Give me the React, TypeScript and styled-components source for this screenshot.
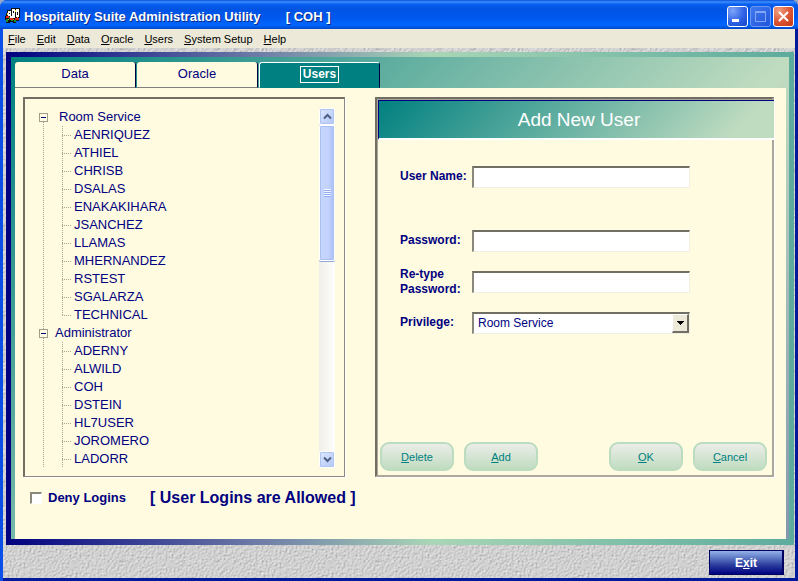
import React, { useState } from "react";
import styled, { createGlobalStyle, css } from "styled-components";

const navy = "#000080";
const cream = "#fffbe0";
const sans = '"Liberation Sans", Arial, sans-serif';

const grain =
  "url(\"data:image/svg+xml;utf8,<svg xmlns='http://www.w3.org/2000/svg' width='256' height='256'><filter id='g' x='0' y='0' width='100%25' height='100%25' color-interpolation-filters='sRGB'><feTurbulence type='fractalNoise' baseFrequency='0.5' numOctaves='2' stitchTiles='stitch'/><feDiffuseLighting lighting-color='rgb(236,236,236)' surfaceScale='0.7'><feDistantLight azimuth='225' elevation='62'/></feDiffuseLighting></filter><rect width='256' height='256' filter='url(%23g)'/></svg>\")";

const GlobalStyle = createGlobalStyle`
  *, *::before, *::after { box-sizing: border-box; }
  body { margin: 0; background: #9aa8c8; font-family: ${sans}; }
  button, input, select { font-family: inherit; }
  button { cursor: default; }
  ul { list-style: none; margin: 0; padding: 0; }
`;

const Window = styled.div`
  display: flex;
  flex-direction: column;
  min-height: 100vh;
  border-radius: 7px 7px 0 0;
  overflow: hidden;
  background: linear-gradient(90deg, #0a50e8 50%, #001a9a 50%);
`;

const TitleBar = styled.header`
  display: flex;
  align-items: center;
  height: 29px;
  padding: 3px 4px 0 5px;
  background: linear-gradient(
    #0a50d8 0,
    #3c90ff 2px,
    #0a60f0 4px,
    #0054e3 9px,
    #0058ee 18px,
    #0066ff 25px,
    #0048c8 29px
  );
  color: #fff;
`;

const Title = styled.h1`
  flex: 1;
  margin: 0 0 0 3px;
  padding-top: 1px;
  font-size: 13px;
  line-height: 17px;
  font-weight: 700;
  white-space: pre;
  text-shadow: 1px 1px 0 #0a2a8a;
`;

const Captions = styled.div`
  display: flex;
  gap: 2px;
`;

const captionTone = {
  blue: "radial-gradient(circle at 25% 20%, #7fa4f8, #2e62e6 55%, #1746c6)",
  dim: "linear-gradient(135deg, #3f78ec, #2256dc)",
  red: "radial-gradient(circle at 25% 20%, #f0a080, #dc5432 55%, #c03a14)",
};

const CaptionButton = styled.button<{ $tone: keyof typeof captionTone }>`
  display: grid;
  place-items: center;
  width: 21px;
  height: 21px;
  padding: 0;
  border: 1px solid ${(p) => (p.$tone === "dim" ? "#6c97f4" : "#fff")};
  border-radius: 3px;
  background: ${(p) => captionTone[p.$tone]};
`;

const MenuBar = styled.nav`
  display: flex;
  gap: 11px;
  height: 19px;
  margin: 0 3px;
  padding: 0 5px;
  background: #ece9d8;
`;

const MenuItem = styled.button`
  padding: 0;
  border: 0;
  background: none;
  color: #000;
  font-size: 11px;
  line-height: 18px;
`;

const Client = styled.div`
  flex: 1;
  display: flex;
  flex-direction: column;
  margin: 0 3px;
  padding: 4px 1px 0 3px;
  border-bottom: 3px solid #001a9a;
  background: ${grain} #c8c8c8;
`;

const Frame = styled.main`
  flex: 1;
  display: flex;
  padding: 5px 5px 6px;
  background: linear-gradient(90deg, #000080, #7080a8 33%, #a9d6b6 54%, #5cab9d);
`;

const Surface = styled.div`
  flex: 1;
  min-width: 0;
  display: flex;
  flex-direction: column;
  padding: 5px 3px 0 4px;
  background: linear-gradient(135deg, #008080, #c0dcc0 62%, #8496b0);
`;

const Tabs = styled.div`
  display: flex;
  gap: 1px;
`;

const Tab = styled.button<{ $active: boolean }>`
  display: grid;
  place-items: center;
  width: 121px;
  height: 26px;
  padding: 0 0 2px;
  border: 0;
  border-right: 1px solid #000040;
  border-bottom: 1px solid #808080;
  border-radius: 3px 3px 0 0;
  background: ${cream};
  color: ${navy};
  font-size: 13px;
  line-height: 15px;
  ${(p) =>
    p.$active &&
    css`
      border-top: 1px solid #fff;
      border-left: 1px solid #fff;
      border-bottom-color: #008080;
      background: #008080;
      color: #fff;
      font-size: 12px;
      font-weight: 700;
    `}
`;

const TabLabel = styled.span<{ $active: boolean }>`
  padding: 0 2px;
  border: 1px solid ${(p) => (p.$active ? "#fff" : "transparent")};
`;

const Page = styled.div`
  flex: 1;
  padding: 9px 12px 0 8px;
  background: ${cream};
`;

const Columns = styled.div`
  display: grid;
  grid-template-columns: minmax(0, 322fr) minmax(0, 399fr);
  gap: 30px;
`;

const TreePanel = styled.section`
  display: flex;
  justify-content: space-between;
  padding: 9px 9px 8px 12px;
  border: 2px solid #716f64;
  border-right: 1px solid #8c8a80;
  border-bottom: 1px solid #8c8a80;
  box-shadow: 1px 1px 0 #fff;
`;

const vDots = "repeating-linear-gradient(#a8a68c 0 1px, transparent 1px 2px)";

const Group = styled.li<{ $first: boolean }>`
  background: ${vDots} 6px ${(p) => (p.$first ? "10px" : "0")} / 1px 100% no-repeat;
`;

const GroupHead = styled.div<{ $gap: number }>`
  display: flex;
  align-items: center;
  gap: ${(p) => p.$gap}px;
  height: 18px;
  padding-left: 2px;
  color: ${navy};
  font-size: 13px;
  line-height: 18px;
`;

const Toggle = styled.button`
  display: grid;
  place-items: center;
  width: 9px;
  height: 9px;
  padding: 0;
  border: 1px solid #a09e88;
  background: ${cream};
`;

const Leaf = styled.li<{ $last: boolean }>`
  display: flex;
  align-items: center;
  gap: 3px;
  height: 18px;
  margin-left: 25px;
  background: ${vDots} 0 0 / 1px ${(p) => (p.$last ? "10px" : "100%")} no-repeat;
  color: ${navy};
  font-size: 13px;
  line-height: 18px;

  &::before {
    content: "";
    width: 9px;
    height: 1px;
    background: repeating-linear-gradient(90deg, #a8a68c 0 1px, transparent 1px 2px);
  }
`;

const ScrollBar = styled.div`
  display: flex;
  flex-direction: column;
  width: 16px;
  background: linear-gradient(90deg, #f0efe8, #fefefb);
`;

const ScrollButton = styled.button`
  display: grid;
  place-items: center;
  height: 17px;
  padding: 0;
  border: 1px solid #fff;
  border-radius: 2px;
  background: linear-gradient(135deg, #dce6ff, #b4c8f6);
  box-shadow: inset 0 0 0 1px #b0c4f0;
`;

const Thumb = styled.div`
  display: grid;
  place-items: center;
  flex: 0 0 136px;
  border: 1px solid #fff;
  border-radius: 2px;
  background: linear-gradient(90deg, #c8d6fb, #c2d2fd 60%, #a9bff2);
  box-shadow: inset 0 0 0 1px #aac0f2, 0 1px 0 #8fa8d8;
`;

const Grip = styled.div`
  width: 7px;
  height: 8px;
  background: repeating-linear-gradient(#f2f6ff 0 1px, #92aef0 1px 2px);
`;

const Track = styled.div`
  flex: 1;
`;

const FormPanel = styled.form`
  display: flex;
  flex-direction: column;
  border: 2px solid #716f64;
  border-right-color: #aca899;
  border-bottom-color: #aca899;
  box-shadow: 1px 1px 0 #fff, inset 1px 1px 0 #aca899;
`;

const FormTitle = styled.h2`
  margin: 1px -2px 0 1px;
  padding: 1px 0 0 5px;
  border-top: 1px solid ${navy};
  border-left: 1px solid ${navy};
  border-bottom: 2px solid #fff;
  background: linear-gradient(135deg, #008080, #c0dcc0 90%);
  color: #fff;
  font-size: 19px;
  line-height: 36px;
  font-weight: 400;
  text-align: center;
`;

const Fields = styled.div`
  padding: 26px 82px 0 23px;
`;

const Field = styled.div<{ $space: number }>`
  display: grid;
  grid-template-columns: 72px minmax(0, 1fr);
  grid-template-rows: 22px;
  align-items: center;
  margin-bottom: ${(p) => p.$space}px;
`;

const Label = styled.label`
  padding-bottom: 1px;
  color: ${navy};
  font-size: 12px;
  line-height: 15px;
  font-weight: 700;
  white-space: pre-line;
`;

const sunken = css`
  width: 100%;
  height: 22px;
  border: 2px solid #8a887c;
  border-top-color: #716f64;
  border-right: 1px solid #f1efe2;
  border-bottom: 1px solid #f1efe2;
  border-radius: 0;
  background: #fff;
  color: ${navy};
  font-size: 12px;
  outline: none;
`;

const TextBox = styled.input`
  ${sunken}
  padding: 0 4px;
`;

const SelectFrame = styled.div`
  ${sunken}
  display: grid;
  grid-template-columns: 1fr 17px;
`;

const Select = styled.select`
  grid-area: 1 / 1 / 2 / 3;
  padding: 0 0 1px 4px;
  border: 0;
  appearance: none;
  background: transparent;
  color: ${navy};
  font-size: 12px;
  line-height: 18px;
  outline: none;
`;

const DropArrow = styled.span`
  grid-area: 1 / 2;
  display: grid;
  place-items: center;
  border: 1px solid #fff;
  border-right: 2px solid #716f64;
  border-bottom: 2px solid #716f64;
  background: #ece9d8;
  pointer-events: none;
`;

const Actions = styled.div`
  display: flex;
  gap: 10px;
  margin-top: auto;
  padding: 0 5px 4px 3px;
`;

const ActionButton = styled.button<{ $push?: boolean }>`
  width: 74px;
  height: 29px;
  margin-left: ${(p) => (p.$push ? "auto" : "0")};
  padding: 0;
  border: 2px solid #bcdcc0;
  border-radius: 9px;
  background: linear-gradient(#ebede8, #c0dcc0);
  color: #008080;
  font-size: 11px;
`;

const Status = styled.div`
  display: flex;
  align-items: center;
  padding: 11px 0 31px 7px;
  color: ${navy};
`;

const CheckBox = styled.input`
  appearance: none;
  width: 12px;
  height: 12px;
  margin: 0 6px 0 0;
  border: 1px solid #fff;
  border-top: 2px solid #8a887c;
  border-left: 2px solid #8a887c;
  background: #fff;

  &:checked {
    background: ${navy};
  }
`;

const DenyLabel = styled.label`
  font-size: 13px;
  line-height: 18px;
  font-weight: 700;
`;

const StatusText = styled.strong`
  margin-left: 24px;
  font-size: 16px;
  line-height: 20px;
`;

const Footer = styled.footer`
  display: flex;
  justify-content: flex-end;
  padding: 5px 10px 3px;
`;

const ExitButton = styled.button`
  width: 75px;
  height: 25px;
  padding: 0;
  border: 1px solid #000060;
  border-right-width: 2px;
  background: linear-gradient(#92b2ea, #2c3f9e 60%, #000080);
  color: #fff;
  font-size: 12px;
  font-weight: 700;
`;

const Logo = () => (
  <svg width="16" height="16" viewBox="0 0 16 16" shapeRendering="crispEdges" aria-hidden="true">
    <path d="M2 2h4V0h9v10h-1v3h-3v2H8v-1H5v1H1v-3H0V8h1V5h1z" fill="#101010" />
    <path d="M3 3h3v5H3zM7 1h3v7H7zM11 1h3v8h-3zM5 8h5v2H5z" fill="#fff" />
    <path d="M8 3h1v2H8zM12 4h1v3h-1zM4 5h1v1H4z" fill="#101010" />
    <path d="M2 5h1v2H2zM4 3h1v1H4zM10 2h1v2h-1z" fill="#f4e060" />
    <path d="M1 8h3v2H1zM5 10h3v2H5zM10 10h4v2h-4z" fill="#e02818" />
    <path d="M1 11h2v3H1zM6 12h2v1H6zM9 12h2v2H9zM4 9h1v2H4z" fill="#18942c" />
    <path d="M3 11h1v1H3zM8 11h1v1H8zM12 9h1v1h-1z" fill="#e8a838" />
  </svg>
);

const Chevron = ({ down = false }: { down?: boolean }) => (
  <svg width="9" height="7" viewBox="0 0 9 7" aria-hidden="true">
    <path
      d={down ? "M1 1.5l3.5 3.5L8 1.5" : "M1 5.5L4.5 2 8 5.5"}
      fill="none"
      stroke="#4d6185"
      strokeWidth="2"
    />
  </svg>
);

/* Underlines the access key at the given index. */
const Key = ({ text, at = 0 }: { text: string; at?: number }) => (
  <>
    {text.slice(0, at)}
    <u>{text[at]}</u>
    {text.slice(at + 1)}
  </>
);

const menus = ["File", "Edit", "Data", "Oracle", "Users", "System Setup", "Help"];
const tabs = ["Data", "Oracle", "Users"];
const groups = [
  {
    name: "Room Service",
    gap: 11,
    users: ["AENRIQUEZ", "ATHIEL", "CHRISB", "DSALAS", "ENAKAKIHARA", "JSANCHEZ", "LLAMAS", "MHERNANDEZ", "RSTEST", "SGALARZA", "TECHNICAL"],
  },
  {
    name: "Administrator",
    gap: 7,
    users: ["ADERNY", "ALWILD", "COH", "DSTEIN", "HL7USER", "JOROMERO", "LADORR"],
  },
];

export default function App() {
  const [active, setActive] = useState("Users");
  const [closed, setClosed] = useState<string[]>([]);

  const toggle = (name: string) =>
    setClosed((c) => (c.includes(name) ? c.filter((n) => n !== name) : [...c, name]));

  return (
    <Window>
      <GlobalStyle />
      <TitleBar>
        <Logo />
        <Title>{"Hospitality Suite Administration Utility       [ COH ]"}</Title>
        <Captions>
          <CaptionButton $tone="blue" aria-label="Minimize">
            <svg width="13" height="13" aria-hidden="true">
              <path d="M1 9h7v3H1z" fill="#fff" />
            </svg>
          </CaptionButton>
          <CaptionButton $tone="dim" aria-label="Maximize" disabled>
            <svg width="13" height="13" aria-hidden="true">
              <path d="M1.5 1.5h10v10h-10zM1 2.5h11" fill="none" stroke="#84a6f6" />
            </svg>
          </CaptionButton>
          <CaptionButton $tone="red" aria-label="Close">
            <svg width="13" height="13" aria-hidden="true">
              <path d="M2 2l9 9M11 2l-9 9" stroke="#fff" strokeWidth="2" />
            </svg>
          </CaptionButton>
        </Captions>
      </TitleBar>
      <MenuBar>
        {menus.map((m) => (
          <MenuItem key={m}>
            <Key text={m} />
          </MenuItem>
        ))}
      </MenuBar>
      <Client>
        <Frame>
          <Surface>
            <Tabs role="tablist">
              {tabs.map((t) => (
                <Tab key={t} role="tab" aria-selected={t === active} $active={t === active} onClick={() => setActive(t)}>
                  <TabLabel $active={t === active}>{t}</TabLabel>
                </Tab>
              ))}
            </Tabs>
            <Page>
              <Columns>
                <TreePanel>
                  <ul>
                    {groups.map((g, i) => (
                      <Group key={g.name} $first={i === 0}>
                        <GroupHead $gap={g.gap}>
                          <Toggle aria-label={`Toggle ${g.name}`} onClick={() => toggle(g.name)}>
                            <svg width="5" height="5" aria-hidden="true">
                              <path d={closed.includes(g.name) ? "M0 2h5v1H0zM2 0h1v5H2z" : "M0 2h5v1H0z"} fill={navy} />
                            </svg>
                          </Toggle>
                          <span>{g.name}</span>
                        </GroupHead>
                        {!closed.includes(g.name) && (
                          <ul>
                            {g.users.map((u, n) => (
                              <Leaf key={u} $last={i === 0 && n === g.users.length - 1}>
                                {u}
                              </Leaf>
                            ))}
                          </ul>
                        )}
                      </Group>
                    ))}
                  </ul>
                  <ScrollBar>
                    <ScrollButton aria-label="Scroll up">
                      <Chevron />
                    </ScrollButton>
                    <Thumb>
                      <Grip />
                    </Thumb>
                    <Track />
                    <ScrollButton aria-label="Scroll down">
                      <Chevron down />
                    </ScrollButton>
                  </ScrollBar>
                </TreePanel>
                <FormPanel onSubmit={(e) => e.preventDefault()}>
                  <FormTitle>Add New User</FormTitle>
                  <Fields>
                    <Field $space={42}>
                      <Label htmlFor="user">User Name:</Label>
                      <TextBox id="user" />
                    </Field>
                    <Field $space={19}>
                      <Label htmlFor="pass">Password:</Label>
                      <TextBox id="pass" type="password" />
                    </Field>
                    <Field $space={19}>
                      <Label htmlFor="again">{"Re-type\nPassword:"}</Label>
                      <TextBox id="again" type="password" />
                    </Field>
                    <Field $space={0}>
                      <Label htmlFor="privilege">Privilege:</Label>
                      <SelectFrame>
                        <Select id="privilege" defaultValue="Room Service">
                          <option>Room Service</option>
                          <option>Administrator</option>
                        </Select>
                        <DropArrow>
                          <svg width="7" height="4" shapeRendering="crispEdges" aria-hidden="true">
                            <path d="M0 0h7L3.5 4z" />
                          </svg>
                        </DropArrow>
                      </SelectFrame>
                    </Field>
                  </Fields>
                  <Actions>
                    <ActionButton type="button"><Key text="Delete" /></ActionButton>
                    <ActionButton type="button"><Key text="Add" /></ActionButton>
                    <ActionButton type="submit" $push><Key text="OK" /></ActionButton>
                    <ActionButton type="button"><Key text="Cancel" /></ActionButton>
                  </Actions>
                </FormPanel>
              </Columns>
              <Status>
                <CheckBox id="deny" type="checkbox" />
                <DenyLabel htmlFor="deny">Deny Logins</DenyLabel>
                <StatusText>[ User Logins are Allowed ]</StatusText>
              </Status>
            </Page>
          </Surface>
        </Frame>
        <Footer>
          <ExitButton><Key text="Exit" at={1} /></ExitButton>
        </Footer>
      </Client>
    </Window>
  );
}
